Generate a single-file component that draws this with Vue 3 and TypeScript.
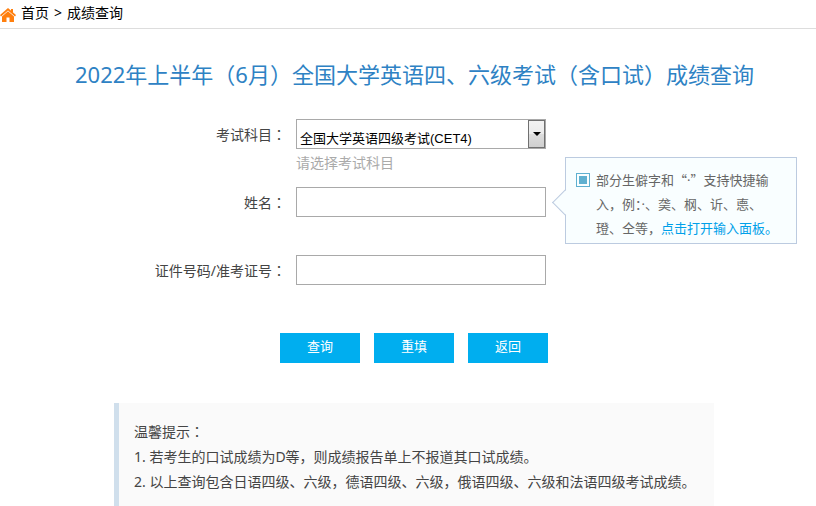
<script setup lang="ts">
import { ref } from 'vue'

const subjects = ['全国大学英语四级考试(CET4)', '全国大学英语六级考试(CET6)']
const subject = ref(subjects[0])
const fullName = ref('')
const idNumber = ref('')

function reset(): void {
  subject.value = subjects[0]
  fullName.value = ''
  idNumber.value = ''
}
</script>

<template>
  <div class="page">
    <nav class="crumbs">
      <svg class="home" viewBox="0 0 16 14" aria-hidden="true">
        <path d="M11 1h2v4h-2z" />
        <path d="M8 0L0 7l1 1.4L8 2.4l7 6L16 7z" />
        <path d="M8 3.2L2 8.4V14h4.5V9.5h3V14H14V8.4z" />
      </svg>
      <a href="#">首页</a>
      <span>&gt;</span>
      <span>成绩查询</span>
    </nav>

    <h1>2022年上半年（6月）全国大学英语四、六级考试（含口试）成绩查询</h1>

    <form @submit.prevent>
      <div class="row">
        <label for="subject">考试科目<span class="colon">：</span></label>
        <div class="field">
          <div class="select">
            <select id="subject" v-model="subject">
              <option v-for="s in subjects" :key="s">{{ s }}</option>
            </select>
            <span class="arrow"></span>
          </div>
          <p class="hint">请选择考试科目</p>
        </div>
      </div>
      <div class="row">
        <label for="name">姓名<span class="colon">：</span></label>
        <div class="field">
          <input id="name" v-model="fullName" type="text" />
          <div class="tip">
            <span class="mark"></span>
            <p>部分生僻字和“<span class="dot">·</span>”支持快捷输入，例：<span class="dot">·</span>、䶮、㭎、䜣、㥁、璒、仝等，<a href="#">点击打开输入面板。</a></p>
          </div>
        </div>
      </div>
      <div class="row">
        <label for="idno">证件号码/准考证号<span class="colon">：</span></label>
        <div class="field">
          <input id="idno" v-model="idNumber" type="text" />
        </div>
      </div>
      <div class="actions">
        <button type="submit">查询</button>
        <button type="button" @click="reset">重填</button>
        <button type="button">返回</button>
      </div>
    </form>

    <section class="notice">
      <p>温馨提示<span class="colon">：</span></p>
      <p>1. 若考生的口试成绩为D等，则成绩报告单上不报道其口试成绩。</p>
      <p>2. 以上查询包含日语四级、六级，德语四级、六级，俄语四级、六级和法语四级考试成绩。</p>
    </section>
  </div>
</template>

<style>
body {
  background: #fff;
}
</style>

<style scoped>
.page {
  font-family: "Noto Sans", "Noto Sans CJK SC", sans-serif;
  font-size: 14px;
  color: #444;
  overflow: hidden;
}
p {
  margin: 0;
}
.colon {
  font-family: "Noto Sans CJK TC", sans-serif;
}
.dot {
  font-family: "Noto Sans", sans-serif;
}
.crumbs {
  box-sizing: border-box;
  display: flex;
  align-items: center;
  gap: 5px;
  height: 29px;
  padding-bottom: 2px;
  border-bottom: 1px solid #ddd;
  line-height: 20px;
  color: #000;
}
.crumbs a {
  color: inherit;
  text-decoration: none;
}
.home {
  width: 16px;
  height: 14px;
  margin-top: 3px;
  fill: #ff7f0e;
}
h1 {
  margin: 29px 0 0;
  padding-left: 13px;
  font-size: 22px;
  font-weight: 400;
  line-height: 32px;
  text-align: center;
  color: #2e82c4;
}
form {
  margin-top: 29px;
}
.row {
  display: flex;
  height: 68px;
}
.row label {
  width: 286px;
  margin-right: 10px;
  line-height: 30px;
  text-align: right;
}
.field {
  position: relative;
  width: 250px;
}
input,
select {
  box-sizing: border-box;
  display: block;
  width: 100%;
  height: 30px;
  margin: 0;
  border: 1px solid #a9a9a9;
  border-radius: 0;
  background: #fff;
  font-size: 13px;
  color: #000;
}
select {
  appearance: none;
  padding: 8px 20px 0 3px;
  font-family: "Liberation Sans", "Noto Sans CJK SC", sans-serif;
}
.select {
  position: relative;
}
.arrow {
  position: absolute;
  top: 1px;
  right: 1px;
  bottom: 1px;
  box-sizing: border-box;
  width: 17px;
  border: 1px solid #707070;
  background: linear-gradient(#f2f2f2, #ebebeb 50%, #ddd 50%, #cfcfcf);
  pointer-events: none;
}
.arrow::after {
  content: "";
  position: absolute;
  top: 11px;
  left: 4px;
  border: solid transparent;
  border-width: 4px 4px 0;
  border-top-color: #000;
}
.hint {
  line-height: 28px;
  color: #aaa;
}
.tip {
  position: absolute;
  top: -30px;
  left: 269px;
  box-sizing: border-box;
  display: flex;
  gap: 6px;
  width: 232px;
  padding: 10px 16px 3px 10px;
  border: 1px solid #bccbe0;
  background: #f9feff;
  font-family: "Noto Sans CJK SC", sans-serif;
  font-size: 13px;
  line-height: 24px;
  color: #666;
}
.tip::before {
  content: "";
  position: absolute;
  top: 35px;
  left: -10px;
  width: 18px;
  height: 18px;
  border: solid #bccbe0;
  border-width: 0 0 1px 1px;
  background: linear-gradient(45deg, #f9feff 50%, transparent 50%);
  transform: rotate(45deg);
}
.tip a {
  color: #00a0e9;
  text-decoration: none;
}
.mark {
  box-sizing: border-box;
  flex: none;
  width: 14px;
  height: 14px;
  margin-top: 5px;
  padding: 2px;
  border: 1px solid #5fb0d0;
  background: #5fb0d0 content-box;
}
.actions {
  display: flex;
  gap: 14px;
  margin: 10px 0 0 280px;
}
button {
  width: 80px;
  height: 30px;
  padding: 0 0 6px;
  border: 0;
  background: #00aeef;
  font-family: "Noto Sans CJK SC", sans-serif;
  font-size: 13px;
  color: #fff;
}
.notice {
  box-sizing: border-box;
  max-width: 600px;
  margin: 40px 0 0 114px;
  padding: 16px 15px 13px;
  border-left: 5px solid #d0dfec;
  background: #fafafa;
  line-height: 25px;
}
</style>
